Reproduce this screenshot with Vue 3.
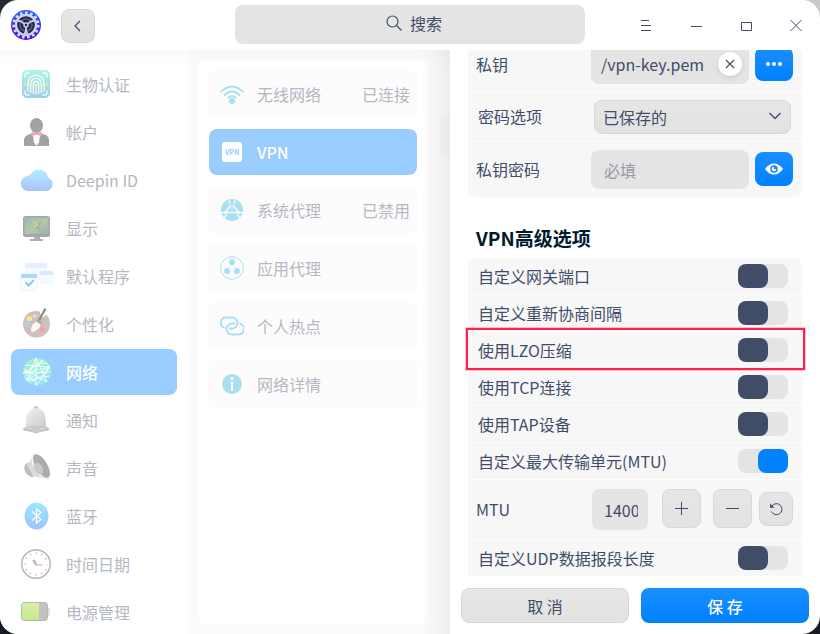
<template>
    <div class="desktop">
        <svg class="sprite" aria-hidden="true">
            <defs>
                <linearGradient id="g-logo" x1="0" y1="0" x2="0" y2="1">
                    <stop offset="0" stop-color="#2a62ff" />
                    <stop offset="1" stop-color="#4a08dc" />
                </linearGradient>
                <linearGradient id="g-bio" x1="0" y1="0" x2="0" y2="1">
                    <stop offset="0" stop-color="#aef5e0" />
                    <stop offset="1" stop-color="#9fcbe6" />
                </linearGradient>
                <linearGradient id="g-cloud" x1="0" y1="0" x2="0" y2="1">
                    <stop offset="0" stop-color="#b2effd" />
                    <stop offset="1" stop-color="#adc0fd" />
                </linearGradient>
                <linearGradient id="g-screen" x1="0" y1="0" x2="1" y2="1">
                    <stop offset="0" stop-color="#a0b5b6" />
                    <stop offset=".5" stop-color="#b3c9a8" />
                    <stop offset="1" stop-color="#9dafb6" />
                </linearGradient>
                <linearGradient id="g-gray" x1="0" y1="0" x2="1" y2="1">
                    <stop offset="0" stop-color="#f4f4f4" />
                    <stop offset="1" stop-color="#c6c6c6" />
                </linearGradient>
                <linearGradient id="g-net" x1="0" y1="0" x2="0" y2="1">
                    <stop offset="0" stop-color="#9ff3cb" />
                    <stop offset="1" stop-color="#93e2f3" />
                </linearGradient>
                <linearGradient id="g-bt" x1="0" y1="0" x2="0" y2="1">
                    <stop offset="0" stop-color="#9de8fd" />
                    <stop offset="1" stop-color="#9cc4fd" />
                </linearGradient>
                <linearGradient id="g-bat" x1="0" y1="0" x2="0" y2="1">
                    <stop offset="0" stop-color="#d9efae" />
                    <stop offset="1" stop-color="#c5e98c" />
                </linearGradient>
            </defs>

            <symbol id="i-bio" viewBox="0 0 36 36">
                <rect x="4" y="4" width="28" height="28" rx="5" fill="url(#g-bio)" />
                <g fill="none" stroke="#fff" stroke-opacity=".9" stroke-width="1.3" stroke-linecap="round">
                    <path d="M7 11V9.500Q7 7 9.500 7H11M25 7h1.500Q29 7 29 9.500V11M29 25v1.500Q29 29 26.500 29H25M11 29H9.500Q7 29 7 26.500V25" />
                    <path d="M10 25V17a8 8 0 0 1 16 0v8M12.700 26.500V17.500a5.300 5.300 0 0 1 10.600 0v9M15.300 27.500V18a2.700 2.700 0 0 1 5.400 0v9.500M18 18v10" />
                </g>
                <path d="M6 18.500h24" stroke="#e9f7a5" stroke-width="1.400" stroke-opacity=".8" />
            </symbol>

            <symbol id="i-user" viewBox="0 0 36 36">
                <ellipse cx="18.500" cy="11.500" rx="6.500" ry="7.500" fill="#a2a2a2" />
                <path d="M6 32v-5.500q0-4.500 4.500-6l4.500-1.500h7l4.500 1.500q4.500 1.500 4.500 6V32z" fill="#a2a2a2" />
                <path d="M15 20.500h7l-1 8-2.500 3.500-2.500-3.500z" fill="#fff" />
                <path d="M13.500 17.500l5 2 5-2v5l-5-2-5 2z" fill="#efa5c8" />
            </symbol>

            <symbol id="i-cloud" viewBox="0 0 36 36">
                <path d="M10 29a7.500 7.500 0 0 1-1-14.900q1.500-1.300 3-.8A9.500 9.500 0 0 1 30 15.500a7 7 0 0 1-2 13.500z" fill="url(#g-cloud)" />
            </symbol>

            <symbol id="i-display" viewBox="0 0 36 36">
                <rect x="5" y="6" width="27" height="21" rx="2.500" fill="#a6a6a6" />
                <rect x="6.500" y="7.500" width="24" height="16.500" fill="url(#g-screen)" />
                <path d="M15 10l4 4 5-3-3 6 2 5-4-4-5 1 3-4z" fill="#a9aeb0" />
                <path d="M15 11l5 5M19 15l-4 3" stroke="#c3e27d" stroke-width="1.500" />
                <path d="M16 27h6v2h3v2H12v-2h4z" fill="#aeaeae" />
            </symbol>

            <symbol id="i-apps" viewBox="0 0 36 36">
                <rect x="7" y="5" width="22" height="17" rx="2" fill="#f6faff" />
                <path d="M7 10V7q0-2 2-2h18q2 0 2 2v3z" fill="#e3effe" />
                <rect x="22" y="13" width="13" height="12" rx="1.500" fill="#f7fbff" stroke="#e3eefa" stroke-width=".6" />
                <path d="M22 17v-2.500q0-1.500 1.500-1.500h10q1.500 0 1.500 1.500V17z" fill="#d8eafe" />
                <rect x="3" y="16" width="16" height="16" rx="1.500" fill="#fbfdff" stroke="#d8eafa" stroke-width=".6" />
                <path d="M3 20v-2.500Q3 16 4.500 16h13q1.500 0 1.500 1.500V20z" fill="#a9d8fe" />
                <path d="M7.500 24.500l3 3 5.500-5.500" fill="none" stroke="#8fc8f8" stroke-width="2.200" />
            </symbol>

            <symbol id="i-palette" viewBox="0 0 36 36">
                <path d="M18 5C10 5 5 11 5 18s5.500 13.500 13.500 13.500S32 25.500 32 18q0-6-4-9.500l-3 3q-2.500-1-2.500-3.500 0-1.500-1-2.500z" fill="#cfbfb8" />
                <circle cx="11.500" cy="12.500" r="2.600" fill="#fbe29a" />
                <circle cx="16.500" cy="10" r="1.800" fill="#e6dfdb" />
                <circle cx="9.500" cy="18.500" r="2.600" fill="#a5d3f5" />
                <circle cx="24.500" cy="23.500" r="2.600" fill="#f59cb6" />
                <path d="M27.500 2.500l-6.500 12" stroke="#868b8f" stroke-width="2.200" />
                <path d="M20 13l4 3-2 3-4-3z" fill="#a2aaad" />
                <path d="M18.500 15.500l4 3q0 5-9 8-2-7 5-11z" fill="#fafafa" />
            </symbol>

            <symbol id="i-network" viewBox="0 0 36 36">
                <circle cx="19" cy="18" r="14" fill="url(#g-net)" />
                <g fill="none" stroke="#fff" stroke-opacity=".85" stroke-width=".9">
                    <path d="M18 4v28M5 19l28-1M7 11l25 2L9 26 18 4l11 24L6 15l13 16L32 13 5 19l20-13-16 20 23-4" />
                    <ellipse cx="19" cy="18" rx="13.500" ry="6" transform="rotate(-35 19 18)" />
                </g>
            </symbol>

            <symbol id="i-bell" viewBox="0 0 36 36">
                <circle cx="18" cy="6.500" r="2.500" fill="#c9c9c9" />
                <path d="M8 24q0-3 .500-8Q9.500 6 18 6t9.500 10q.5 5 .5 8l3 4H5z" fill="url(#g-gray)" />
                <ellipse cx="18" cy="27" rx="13" ry="3" fill="#bdbdbd" />
                <ellipse cx="18" cy="26.500" rx="11" ry="1.800" fill="#d3d3d3" />
                <circle cx="18" cy="27.500" r="4" fill="#cacaca" />
            </symbol>

            <symbol id="i-sound" viewBox="0 0 36 36">
                <ellipse cx="12" cy="20" rx="5" ry="7.500" transform="rotate(-30 12 20)" fill="#bcbcbc" />
                <path d="M9 15L17 3l14 27-16-4z" fill="#dadada" />
                <ellipse cx="23" cy="16.500" rx="7" ry="14.500" transform="rotate(-31 23 16.500)" fill="#f4f4f4" />
                <ellipse cx="23.500" cy="16" rx="5.700" ry="13.300" transform="rotate(-31 23.500 16)" fill="#acacac" />
                <ellipse cx="20.500" cy="18.500" rx="4" ry="6.500" transform="rotate(-31 20.500 18.500)" fill="#c8c8c8" />
            </symbol>

            <symbol id="i-bluetooth" viewBox="0 0 36 36">
                <ellipse cx="18.500" cy="18" rx="12" ry="13.500" fill="url(#g-bt)" />
                <path d="M14 13.500l9 8-4.500 3.500V11l4.500 3.500-9 8" fill="none" stroke="#fff" stroke-width="1.200" />
            </symbol>

            <symbol id="i-clock" viewBox="0 0 36 36">
                <circle cx="18" cy="18" r="14.200" fill="#fff" stroke="#bdbdbd" stroke-width="1.700" />
                <circle cx="18" cy="18" r="11" fill="none" stroke="#aaa" stroke-width="1.500" stroke-dasharray="1 4.760" stroke-dashoffset=".5" />
                <path d="M18 18.500L15.500 14" stroke="#b0b0b0" stroke-width="2.400" />
                <path d="M17 19h7.500" stroke="#f9b9b9" stroke-width="1.700" />
            </symbol>

            <symbol id="i-battery" viewBox="0 0 36 36">
                <path d="M30 13.500h1.800v8H30z" fill="#dedede" />
                <rect x="3.500" y="8.500" width="26" height="18" rx="3" fill="#c2c2c2" stroke="#b4baaa" />
                <path d="M21 9v17H7q-3 0-3-3V12q0-3 3-3z" fill="url(#g-bat)" />
            </symbol>

            <symbol id="i-wifi" viewBox="0 0 24 24">
                <path
                    d="M.5 10Q12-.4 23.500 10M4 13.500q8-8 16 0M7.500 16.500q4.500-5 9 0"
                    fill="none"
                    stroke="currentColor"
                    stroke-width="1.800"
                />
                <circle cx="12" cy="19" r="3" fill="currentColor" />
            </symbol>

            <symbol id="i-proxy" viewBox="0 0 24 24">
                <circle cx="12" cy="12" r="11" fill="currentColor" />
                <g fill="none" stroke="#fcfcfc">
                    <path d="M1 14.500h22" stroke-width="1.600" />
                    <path d="M11 7L6.500 13M13 7l4.500 6" stroke-width="1.600" />
                    <path d="M9 1.500q0 3 1 4.500M15 1.500q0 3-1 4.500" stroke-width="1.200" />
                    <path d="M12 9v2M7 16.500l-3 3.500M17 16.500l3 3.500" stroke-width="1.200" />
                </g>
                <circle cx="5.500" cy="14.500" r="1.800" fill="#fcfcfc" />
                <circle cx="18.500" cy="14.500" r="1.800" fill="#fcfcfc" />
            </symbol>

            <symbol id="i-appproxy" viewBox="0 0 24 24">
                <circle cx="12" cy="12" r="11.300" fill="none" stroke="currentColor" />
                <path d="M12 6L7 15h10z" fill="none" stroke="currentColor" stroke-opacity=".35" stroke-width=".7" />
                <g fill="currentColor">
                    <circle cx="12" cy="6" r="3" />
                    <circle cx="7" cy="15" r="3" />
                    <circle cx="17" cy="15" r="3" />
                </g>
            </symbol>

            <symbol id="i-hotspot" viewBox="0 0 24 24">
                <g fill="none" stroke="currentColor" stroke-width="1.900">
                    <path d="M4.500 14A5.400 5.400 0 0 1 6.500 3.500H12a5.400 5.400 0 0 1 0 11H9" />
                    <path d="M19.500 9.500a5.400 5.400 0 0 1-2 11H12a5.400 5.400 0 0 1 0-11h3" />
                </g>
            </symbol>

            <symbol id="i-info" viewBox="0 0 24 24">
                <circle cx="12" cy="12" r="10" fill="currentColor" />
                <circle cx="12" cy="6.500" r="1.500" fill="#fff" />
                <path d="M11 9.500h2V19h-2z" fill="#fff" />
            </symbol>
        </svg>

        <div class="window">
            <header class="titlebar">
                <div class="titlebar-left">
                    <svg class="logo" viewBox="0 0 30 30" aria-hidden="true">
                        <circle cx="15" cy="15" r="15" fill="url(#g-logo)" />
                        <circle cx="15" cy="15" r="12.300" fill="none" stroke="#dfe4f5" stroke-width="2.600" stroke-dasharray="2.600 2.550" />
                        <circle cx="15" cy="15" r="10" fill="#1d2050" stroke="#cdd3ea" stroke-width="2.400" />
                        <circle cx="15" cy="15" r="6" fill="none" stroke="#555a6b" stroke-width="2" />
                        <path d="M15 15V21M15 15L9.500 11M15 15l5.500-4M15 21l-2 4M15 21l2 4M9.500 11L5 11M20.500 11H25" stroke="#c5cae0" stroke-width="2" />
                        <circle cx="15" cy="15" r="2.800" fill="#c5cae0" />
                        <circle cx="15" cy="15" r="1.200" fill="#1a2070" />
                    </svg>
                    <button class="btn back" aria-label="返回">
                        <svg width="16" height="16" viewBox="0 0 16 16">
                            <path d="M10 3L5 8l5 5" fill="none" stroke="currentColor" stroke-width="1.200" />
                        </svg>
                    </button>
                </div>
                <button class="search">
                    <svg width="16" height="16" viewBox="0 0 16 16">
                        <circle cx="6.500" cy="6.500" r="5.500" fill="none" stroke="currentColor" stroke-width="1.200" />
                        <path d="M10.500 10.500L15.500 15.500" stroke="currentColor" stroke-width="1.200" />
                    </svg>
                    搜索
                </button>
                <div class="window-controls">
                    <button aria-label="菜单">
                        <svg width="12" height="12" viewBox="0 0 12 12"><path d="M1 1.500h8M1 6.500h10M1 11.500h10" /></svg>
                    </button>
                    <button aria-label="最小化">
                        <svg width="12" height="12" viewBox="0 0 12 12"><path d="M1 7.500h11" /></svg>
                    </button>
                    <button aria-label="最大化">
                        <svg width="12" height="12" viewBox="0 0 12 12"><path d="M1.500 3.500h10v8h-10z" /></svg>
                    </button>
                    <button aria-label="关闭">
                        <svg width="12" height="12" viewBox="0 0 12 12"><path d="M.5 1l11 11M11.500 1L.5 12" /></svg>
                    </button>
                </div>
            </header>

            <div class="content">
                <nav class="sidebar">
                    <button
                        v-for="item in modules"
                        :key="item.icon"
                        class="module"
                        :class="{ active: item.icon === currentModule }"
                        @click="currentModule = item.icon"
                    >
                        <svg width="36" height="36" aria-hidden="true"><use :href="'#i-' + item.icon" /></svg>
                        {{ item.label }}
                    </button>
                </nav>

                <section class="middle">
                    <div class="list">
                        <button
                            v-for="item in networks"
                            :key="item.icon"
                            class="card"
                            :class="{ active: item.icon === currentNetwork }"
                            @click="currentNetwork = item.icon"
                        >
                            <span v-if="item.icon === 'vpn'" class="badge">VPN</span>
                            <svg v-else width="24" height="24" aria-hidden="true"><use :href="'#i-' + item.icon" /></svg>
                            <span>{{ item.label }}</span>
                            <span class="status">{{ item.status }}</span>
                        </button>
                    </div>
                    <div class="shade"></div>
                </section>

                <section class="drawer">
                    <div class="scroll">
                        <div class="group first">
                            <div class="row tall">
                                <label for="key">私钥</label>
                                <div class="field">
                                    <input id="key" v-model="keyFile" type="text" class="path">
                                    <button class="clear" aria-label="清除" @click="keyFile = ''">
                                        <svg width="10" height="10" viewBox="0 0 10 10">
                                            <path d="M1 1l8 8M9 1L1 9" stroke="currentColor" stroke-width="1.100" />
                                        </svg>
                                    </button>
                                </div>
                                <button class="btn primary square" aria-label="选择文件">
                                    <svg width="18" height="18" viewBox="0 0 18 18" fill="#fff">
                                        <circle cx="3" cy="9" r="2" />
                                        <circle cx="9" cy="9" r="2" />
                                        <circle cx="15" cy="9" r="2" />
                                    </svg>
                                </button>
                            </div>
                            <div class="row mid">
                                <label for="mode">密码选项</label>
                                <div class="select">
                                    <select id="mode" v-model="mode">
                                        <option>已保存的</option>
                                        <option>总是询问</option>
                                        <option>不需要</option>
                                    </select>
                                    <svg width="12" height="8" viewBox="0 0 12 8" aria-hidden="true">
                                        <path d="M.5 1L6 6.500 11.500 1" fill="none" stroke="currentColor" stroke-width="1.300" />
                                    </svg>
                                </div>
                            </div>
                            <div class="row tall">
                                <label for="keypass">私钥密码</label>
                                <div class="field">
                                    <input id="keypass" type="password" placeholder="必填">
                                </div>
                                <button class="btn primary square" aria-label="显示密码">
                                    <svg width="18" height="12" viewBox="0 0 18 12">
                                        <path d="M0 6Q4 .5 9 .5T18 6q-4 5.500-9 5.500T0 6z" fill="#fff" />
                                        <circle cx="9" cy="6" r="3" fill="#fff" stroke="#0d87ff" stroke-width="1.500" />
                                        <circle cx="10" cy="5" r="1.200" fill="#0d87ff" />
                                    </svg>
                                </button>
                            </div>
                        </div>

                        <h2>VPN高级选项</h2>

                        <div class="group">
                            <label
                                v-for="opt in options"
                                :key="opt.label"
                                class="row switch-row"
                                :class="{ marked: opt.marked }"
                            >
                                {{ opt.label }}
                                <input v-model="opt.on" type="checkbox" class="switch">
                            </label>
                            <div class="row mtu">
                                <label for="mtu">MTU</label>
                                <input id="mtu" v-model="mtu" type="text" class="mtu-input">
                                <button class="btn step" aria-label="增加" @click="mtu++">
                                    <svg width="13" height="13" viewBox="0 0 13 13"><path d="M0 6.500h13M6.500 0v13" stroke="currentColor" /></svg>
                                </button>
                                <button class="btn step" aria-label="减少" @click="mtu--">
                                    <svg width="13" height="13" viewBox="0 0 13 13"><path d="M0 6.500h13" stroke="currentColor" /></svg>
                                </button>
                                <button class="btn reset" aria-label="重置" @click="mtu = 1400">
                                    <svg width="14" height="14" viewBox="0 0 14 14">
                                        <path d="M3 4A5.500 5.500 0 1 1 2.500 9.500" fill="none" stroke="currentColor" />
                                        <path d="M1 1.500v4.300h4.500z" fill="currentColor" />
                                    </svg>
                                </button>
                            </div>
                            <label class="row switch-row">
                                自定义UDP数据报段长度
                                <input v-model="udp" type="checkbox" class="switch">
                            </label>
                        </div>
                    </div>
                    <footer class="actions">
                        <button class="btn">取 消</button>
                        <button class="btn primary">保 存</button>
                    </footer>
                </section>
            </div>
        </div>
    </div>
</template>

<script setup>
import { ref, reactive } from 'vue'

const modules = [
    { icon: 'bio', label: '生物认证' },
    { icon: 'user', label: '帐户' },
    { icon: 'cloud', label: 'Deepin ID' },
    { icon: 'display', label: '显示' },
    { icon: 'apps', label: '默认程序' },
    { icon: 'palette', label: '个性化' },
    { icon: 'network', label: '网络' },
    { icon: 'bell', label: '通知' },
    { icon: 'sound', label: '声音' },
    { icon: 'bluetooth', label: '蓝牙' },
    { icon: 'clock', label: '时间日期' },
    { icon: 'battery', label: '电源管理' },
]

const networks = [
    { icon: 'wifi', label: '无线网络', status: '已连接' },
    { icon: 'vpn', label: 'VPN' },
    { icon: 'proxy', label: '系统代理', status: '已禁用' },
    { icon: 'appproxy', label: '应用代理' },
    { icon: 'hotspot', label: '个人热点' },
    { icon: 'info', label: '网络详情' },
]

const options = reactive([
    { label: '自定义网关端口', on: false },
    { label: '自定义重新协商间隔', on: false },
    { label: '使用LZO压缩', on: false, marked: true },
    { label: '使用TCP连接', on: false },
    { label: '使用TAP设备', on: false },
    { label: '自定义最大传输单元(MTU)', on: true },
])

const currentModule = ref('network')
const currentNetwork = ref('vpn')
const keyFile = ref('/vpn-key.pem')
const mode = ref('已保存的')
const mtu = ref(1400)
const udp = ref(false)
</script>

<style>
body {
    background: #1c2129;
}
</style>

<style scoped>
.desktop {
    height: 100vh;
    background: linear-gradient(to right, #252b36 50%, #c9cacc 50%) top / 100% 50% no-repeat, #171b22;
    font-family: "Noto Sans CJK SC", "Noto Sans", sans-serif;
    font-size: 16px;
    line-height: 24px;
    color: #414d68;
}

.sprite {
    position: absolute;
    width: 0;
    height: 0;
}

.window {
    display: flex;
    flex-direction: column;
    height: 100%;
    border-radius: 18px;
    background: #fff;
    overflow: hidden;
}

button,
input,
select {
    box-sizing: border-box;
    margin: 0;
    padding: 0;
    border: 0;
    outline: 0;
    font: inherit;
    color: inherit;
    background: none;
}

button {
    cursor: pointer;
}

svg {
    flex: none;
}

.btn {
    display: flex;
    align-items: center;
    justify-content: center;
    border: 1px solid #d8d8d8;
    border-radius: 8px;
    background: linear-gradient(#e6e6e6, #e2e2e2);
}

.btn.primary {
    border: 0;
    color: #fff;
    font-weight: 500;
    background: linear-gradient(#1a8fff, #0081ff);
}

/* title bar */
.titlebar {
    display: grid;
    grid-template-columns: 1fr 350px 1fr;
    flex: none;
    height: 50px;
}

.titlebar-left {
    display: flex;
    align-items: center;
    gap: 20px;
    padding: 2px 0 0 11px;
}

.logo {
    width: 30px;
    height: 30px;
    margin-bottom: 2px;
}

.back {
    width: 34px;
    height: 34px;
}

.search {
    display: flex;
    align-items: center;
    justify-content: center;
    gap: 8px;
    height: 39px;
    margin-top: 5px;
    padding: 0 0 3px 8px;
    border-radius: 8px;
    background: #e4e4e4;
}

.window-controls {
    display: flex;
    justify-content: flex-end;
}

.window-controls button {
    display: flex;
    align-items: center;
    justify-content: center;
    width: 50px;
    height: 50px;
    padding-left: 2px;
}

.window-controls svg {
    overflow: visible;
}

.window-controls path {
    fill: none;
    stroke: currentColor;
}

/* body */
.content {
    display: flex;
    flex: 1;
    min-height: 0;
}

.sidebar {
    display: flex;
    flex-direction: column;
    flex: none;
    box-sizing: border-box;
    gap: 2px;
    width: 188px;
    padding: 11px 11px 0;
    overflow: hidden;
    background: linear-gradient(#fafafa, #fff 16px);
}

.module {
    display: flex;
    align-items: center;
    flex: none;
    gap: 12px;
    height: 46px;
    padding-left: 7px;
    border-radius: 8px;
    color: #b3b8c3;
}

.active.module,
.active.card {
    background: #99ccff;
    color: #fff;
    font-weight: 500;
}

.middle {
    position: relative;
    flex: 1;
    min-width: 0;
    padding: 10px 22px 10px 10px;
    background: linear-gradient(#f7f7f7, #fbfbfb 16px);
}

.list {
    display: flex;
    flex-direction: column;
    gap: 10px;
    box-sizing: border-box;
    height: 100%;
    padding: 10px;
    border-radius: 8px;
    background: #fff;
}

.card {
    display: flex;
    align-items: center;
    gap: 13px;
    height: 48px;
    padding: 0 8px 0 12px;
    border-radius: 8px;
    background: #fcfcfc;
    color: #b3b8c3;
}

.card svg {
    color: #a8dff1;
}

.active.card {
    height: 46px;
    margin: 1px;
    padding-left: 11px;
}

.badge {
    width: 20px;
    height: 20px;
    margin: 0 2px;
    border-radius: 3px;
    background: #fff;
    color: #99ccff;
    font-size: 7px;
    font-weight: 700;
    line-height: 20px;
    text-align: center;
}

.status {
    margin-left: auto;
}

/* shadow that the drawer casts on the list */
.shade {
    position: absolute;
    top: 0;
    right: 0;
    bottom: 0;
    width: 30px;
    background: linear-gradient(to right, rgba(0, 0, 0, 0), rgba(0, 0, 0, 0.02) 40%, rgba(0, 0, 0, 0.06));
}

.shade::after {
    content: "";
    position: absolute;
    top: 65px;
    right: 0;
    width: 10px;
    height: 42px;
    border-radius: 8px 0 0 8px;
    background: rgba(0, 0, 0, 0.01);
}

/* drawer */
.drawer {
    display: flex;
    flex-direction: column;
    flex: none;
    width: 370px;
}

.scroll {
    flex: 1;
    min-height: 0;
    padding: 0 18px;
    overflow: hidden;
}

.group {
    display: flex;
    flex-direction: column;
    gap: 1px;
    border-radius: 8px;
}

.group.first {
    margin-top: -13px;
}

.row {
    display: flex;
    align-items: center;
    box-sizing: border-box;
    padding: 0 9px 0 8px;
    background: #f7f7f7;
}

.row:first-child {
    border-radius: 8px 8px 0 0;
}

.row:last-child {
    border-radius: 0 0 8px 8px;
}

.row > label {
    margin-right: auto;
}

.tall {
    align-items: flex-start;
    gap: 6px;
    height: 55px;
    padding-top: 8px;
}

.tall > label {
    line-height: 38px;
}

.mid {
    height: 48px;
    padding: 0 11px 2px 10px;
}

.field {
    position: relative;
    width: 158px;
}

.field input {
    display: block;
    width: 100%;
    height: 39px;
    padding: 0 13px;
    border-radius: 8px;
    background: #e4e4e4;
}

.field .path {
    padding: 0 10px 2px;
}

.field input::placeholder {
    color: #979ba6;
    opacity: 1;
}

.clear {
    position: absolute;
    top: 7px;
    right: 7px;
    display: flex;
    align-items: center;
    justify-content: center;
    width: 24px;
    height: 24px;
    border-radius: 50%;
    background: #fff;
    box-shadow: 0 2px 4px rgba(0, 0, 0, 0.1);
}

.square {
    width: 38px;
    height: 34px;
    margin-top: 2px;
}

.select {
    position: relative;
    width: 197px;
    margin-top: 2px;
}

.select select {
    display: block;
    appearance: none;
    width: 100%;
    height: 34px;
    padding: 0 8px;
    border: 1px solid #d8d8d8;
    border-radius: 8px;
    background: linear-gradient(#e6e6e6, #e2e2e2);
}

.select svg {
    position: absolute;
    top: 12px;
    right: 10px;
    pointer-events: none;
}

h2 {
    margin: 0;
    padding: 27px 8px 6px;
    font-size: 19px;
    font-weight: 700;
    line-height: 28px;
    color: #001a2e;
}

.switch-row {
    position: relative;
    justify-content: space-between;
    height: 36px;
    padding: 0 14px 0 10px;
}

.switch-row:last-child {
    border-radius: 0;
}

.marked::after {
    content: "";
    position: absolute;
    inset: -4px -3px -2px -2px;
    z-index: 1;
    border: 2px solid #ff1f4f;
    box-shadow: 0 0 0 1px rgba(255, 31, 79, 0.25);
    pointer-events: none;
}

.switch {
    appearance: none;
    width: 50px;
    height: 24px;
    border-radius: 8px;
    background: #e4e4e4;
    cursor: pointer;
}

.switch::before {
    content: "";
    display: block;
    width: 30px;
    height: 24px;
    border-radius: 8px;
    background: #414d68;
}

.switch:checked::before {
    margin-left: 20px;
    background: #0081ff;
}

.mtu {
    align-items: flex-start;
    height: 59px;
    padding-top: 9px;
}

.mtu > label {
    line-height: 40px;
}

.mtu-input {
    width: 56px;
    height: 41px;
    margin-right: 14px;
    padding: 0 10px 0 12px;
    border-radius: 8px;
    background: #e4e4e4;
}

.step {
    width: 39px;
    height: 39px;
    margin-right: 12px;
}

.reset {
    width: 34px;
    height: 34px;
    margin: 3px 0 0 -5px;
}

.actions {
    display: grid;
    grid-template-columns: 1fr 1fr;
    flex: none;
    gap: 12px;
    padding: 12px 11px 11px;
}

.actions .btn {
    height: 35px;
}
</style>
